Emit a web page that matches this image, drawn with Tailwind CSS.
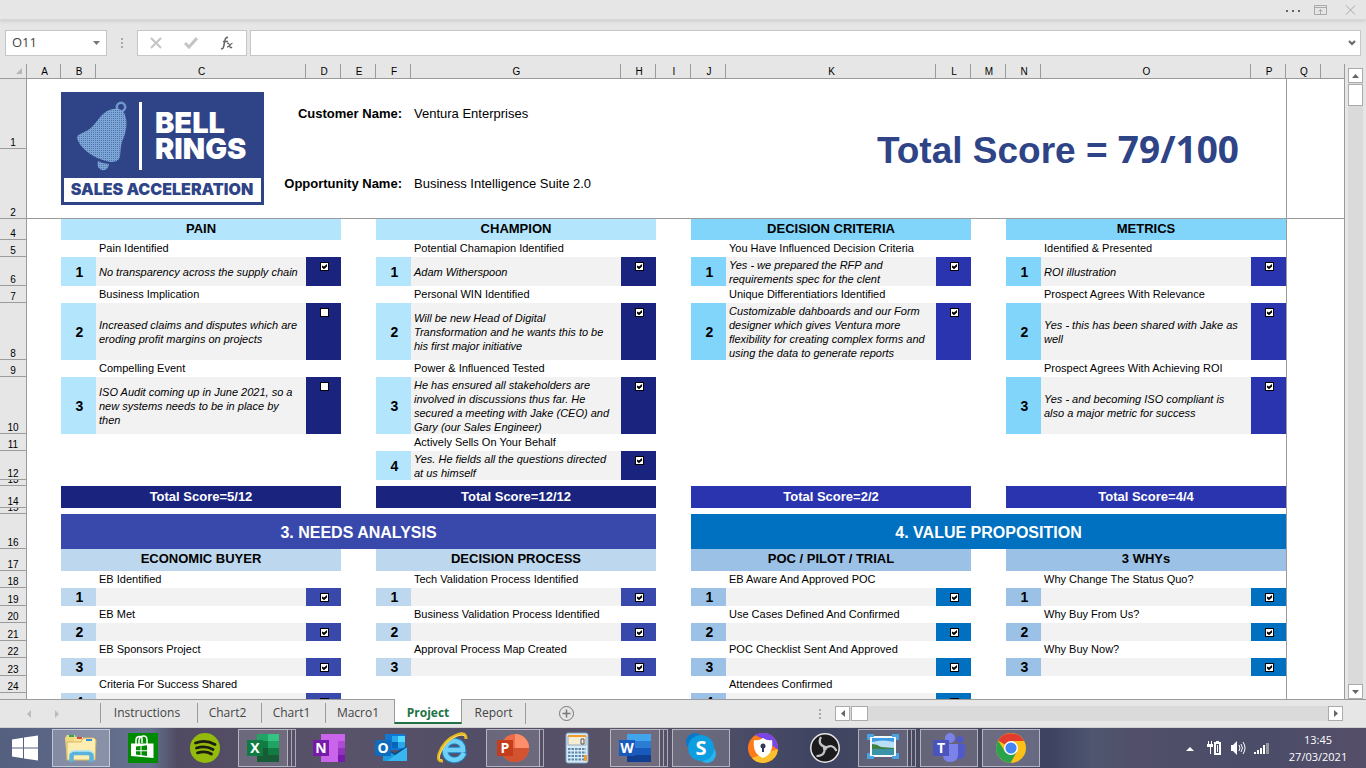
<!DOCTYPE html>
<html lang="en">
<head>
<meta charset="utf-8">
<title>Project</title>
<script src="https://cdn.jsdelivr.net/npm/@tailwindcss/browser@4"></script>
</head>
<body class="h-screen flex flex-col overflow-hidden bg-[#e6e6e6] text-black font-['Liberation_Sans',Arial,sans-serif]">

<svg class="hidden">
  <symbol id="tick" viewBox="0 0 9 9"><path d="M2 3.500v2L4 7.300 7 4.500V2L4 4.600z" fill="#000"/></symbol>
</svg>

<!-- window strip -->
<header class="h-5 shrink-0 flex items-center justify-end gap-3 pr-2 border-b border-[#d6d6d6] shadow-[0_2px_3px_#d2d2d2]">
  <button aria-label="More" class="w-4 h-4"><svg viewBox="0 0 16 16" fill="#666"><path d="M1 8h2v2H1zM7 8h2v2H7zM13 8h2v2h-2z"/></svg></button>
  <button aria-label="Ribbon display options" class="w-4 h-4 mr-px"><svg viewBox="0 0 16 16" fill="none" stroke="#aaa"><path d="M1.500 3.500h12v9h-12zM1.500 5.500h12M7.500 12V7.500M5.500 9.500l2-2 2 2"/></svg></button>
  <button aria-label="Close" class="w-4 h-4"><svg viewBox="0 0 16 16" fill="none" stroke="#aaa"><path d="M4 3.500l9 9M13 3.500l-9 9"/></svg></button>
</header>

<!-- formula bar -->
<div class="shrink-0 flex items-center pl-[5px] pr-[5px] pt-[10px] h-9">
  <div class="w-[102px] h-[26px] flex items-center bg-white border border-[#c6c6c6] pr-[6px]">
    <input aria-label="Name box" value="O11" class="min-w-0 flex-1 pl-[6px] bg-transparent text-[13px] text-[#444] font-['Open_Sans',sans-serif] outline-none">
    <button aria-label="Open name list"><svg width="7" height="4" viewBox="0 0 7 4" fill="#777"><path d="M0 0h7L3.500 4z"/></svg></button>
  </div>
  <svg class="mx-[13px] shrink-0" width="4" height="12" viewBox="0 0 4 12" fill="#aaa"><path d="M1 1h2v2H1zM1 5h2v2H1zM1 9h2v2H1z"/></svg>
  <div class="w-[110px] h-[26px] shrink-0 flex items-center justify-between px-3 bg-white border border-[#c6c6c6]">
    <button aria-label="Cancel"><svg width="12" height="12" viewBox="0 0 12 12" stroke="#c4c4c4" stroke-width="2"><path d="M1 1l10 10M11 1L1 11"/></svg></button>
    <button aria-label="Enter"><svg width="14" height="12" viewBox="0 0 14 12" fill="none" stroke="#c4c4c4" stroke-width="3"><path d="M1 6l4 4 8-9"/></svg></button>
    <button aria-label="Insert function"><svg width="14" height="14" viewBox="0 0 14 14" fill="none" stroke="#666"><path d="M1 12.500c2 1 2.500-1 3-3.500l1-5c.5-2 1.500-3 3-2.500M3 5.500h5" stroke-width="1.500"/><path d="M7 7.500c1.500-1 2 0 2.500 2s1 3 2.500 1.500M12.500 7.500c-1.500-.5-3 3.500-5.500 3.500" stroke-width="1.300"/></svg></button>
  </div>
  <div class="ml-[3px] flex-1 h-[26px] flex items-center bg-white border border-[#c6c6c6] pr-1">
    <input aria-label="Formula" class="min-w-0 flex-1 px-2 bg-transparent text-[13px] outline-none">
    <button aria-label="Expand formula bar"><svg width="8" height="6" viewBox="0 0 8 6" fill="none" stroke="#666" stroke-width="2"><path d="M1 1l3 3 3-3"/></svg></button>
  </div>
</div>

<!-- worksheet -->
<main class="flex-1 min-h-0 flex pt-2">
  <div class="flex-1 min-w-0 overflow-hidden border-r border-[#9b9b9b]">
    <table class="table-fixed w-full border-separate border-spacing-0 text-[11px] leading-[14px]">
      <colgroup id="cols"></colgroup>
      <thead><tr id="letters" class="h-[15px]"></tr></thead>
      <tbody id="sheet"></tbody>
    </table>
  </div>
  <div class="shrink-0 w-[21px] px-[3px] pt-1 flex flex-col bg-[#e6e6e6]">
    <button aria-label="Scroll up" class="h-[15px] shrink-0 bg-white border border-[#ababab] flex items-center justify-center"><svg width="7" height="4" viewBox="0 0 7 4" fill="#666"><path d="M0 4h7L3.500 0z"/></svg></button>
    <div class="flex-1 bg-[#dadada] pt-px"><div class="h-[22px] bg-white border border-[#ababab]"></div></div>
    <button aria-label="Scroll down" class="h-[15px] shrink-0 bg-white border border-[#ababab] flex items-center justify-center"><svg width="7" height="4" viewBox="0 0 7 4" fill="#666"><path d="M0 0h7L3.500 4z"/></svg></button>
  </div>
</main>

<!-- sheet tabs -->
<nav class="h-[29px] shrink-0 flex text-[12px] text-[#444] font-['Open_Sans',sans-serif] border-b border-[#cfcfcf]">
  <div class="w-[100px] shrink-0 flex items-center gap-[23px] pl-[27px] border-t border-[#9b9b9b]">
    <svg width="5" height="8" viewBox="0 0 5 8" fill="#bbb"><path d="M4 0v8L0 4z"/></svg>
    <svg width="5" height="8" viewBox="0 0 5 8" fill="#bbb"><path d="M0 0v8l4-4z"/></svg>
  </div>
  <div class="flex items-stretch border-t border-[#9b9b9b] pt-[3px] pb-[4px]">
    <a href="#" class="w-[97px] pr-1 flex items-center justify-center border-l border-[#9b9b9b]">Instructions</a>
    <a href="#" class="w-16 pr-1 flex items-center justify-center border-l border-[#9b9b9b]">Chart2</a>
    <a href="#" class="w-16 pr-1 flex items-center justify-center border-l border-[#9b9b9b]">Chart1</a>
    <a href="#" class="w-[69px] pr-1 flex items-center justify-center border-l border-[#9b9b9b]">Macro1</a>
  </div>
  <a href="#" class="w-[68px] h-[25px] flex items-center justify-center bg-white border-x border-[#9b9b9b] border-b-2 border-b-[#217346] text-[#217346] font-bold pt-1">Project</a>
  <div class="flex-1 flex items-center border-t border-[#9b9b9b]">
    <a href="#" class="w-16 h-[21px] -mt-px flex items-center justify-center border-r border-[#9b9b9b]">Report</a>
    <button aria-label="New sheet" class="ml-8"><svg width="17" height="17" viewBox="0 0 17 17" fill="none" stroke="#777"><circle cx="8.500" cy="8.500" r="7"/><path d="M8.500 4.500v8M4.500 8.500h8" stroke-width="1.500"/></svg></button>
    <svg class="ml-auto" width="4" height="12" viewBox="0 0 4 12" fill="#aaa"><path d="M1 1h2v2H1zM1 5h2v2H1zM1 9h2v2H1z"/></svg>
    <div class="ml-[13px] mr-[23px] w-[508px] h-[15px] flex bg-[#dadada]">
      <button aria-label="Scroll left" class="w-[15px] bg-white border border-[#ababab] flex items-center justify-center"><svg width="4" height="7" viewBox="0 0 4 7" fill="#666"><path d="M4 0v7L0 3.500z"/></svg></button>
      <div class="ml-px w-[17px] bg-white border border-[#ababab]"></div>
      <button aria-label="Scroll right" class="ml-auto w-[15px] bg-white border border-[#ababab] flex items-center justify-center"><svg width="4" height="7" viewBox="0 0 4 7" fill="#666"><path d="M0 0v7l4-3.500z"/></svg></button>
    </div>
  </div>
</nav>

<!-- taskbar -->
<footer class="h-10 shrink-0 flex items-stretch bg-[linear-gradient(90deg,#545f80_0%,#66728f_11%,#504b62_13%,#59536a_25%,#514d66_36%,#5a5468_46%,#494b66_55%,#3e4461_60%,#4e4b62_70%,#3d4362_77%,#4f566f_80%,#514f69_83%,#4a4c68_92%,#554e69_100%)]">
  <button aria-label="Start" class="w-[50px] flex items-center justify-center"><svg width="28" height="28" viewBox="0 0 28 28" fill="#fff"><path d="M1 5.500l11-1.700v9.700H1zM13 3.600L27 1.500v12H13zM1 14.500h11v9.800L1 22.600zM13 14.500h14v12l-14-2z"/></svg></button>

  <button aria-label="File Explorer" class="mx-[2px] w-[58px] my-px border border-white/50 bg-white/25 flex items-center justify-center"><svg width="32" height="32" viewBox="0 0 32 32"><path d="M0 6l2-3h8l1 3v22H2z" fill="#f1d77d"/><path d="M9 7l1-2h8l1 2v20H9z" fill="#f7e296"/><path d="M4 3h5v2H4z" fill="#2fa84c"/><path d="M12 5h5v2h-5z" fill="#d24b3c"/><path d="M17 8l2-2h10l2 2-1 20H2V10h14z" fill="#fbeeb0" stroke="#d8b860"/><path d="M21 7h6v2h-6z" fill="#3b8fd8"/><path d="M6.500 30v-6q0-3 3-3h14q3 0 3 3v6" fill="none" stroke="#5ab3dc" stroke-width="4.500"/><path d="M5 21q2-2 4-2h15q3 0 4 2" fill="none" stroke="#b9e6f7" stroke-width="1.500"/></svg></button>

  <button aria-label="Store" class="mx-[2px] w-[58px] flex items-center justify-center"><svg width="32" height="32" viewBox="0 0 32 32"><path d="M1 1h30v30H1z" fill="#008a00"/><path d="M4 11.500h22.500V26L4 24z" fill="#fff"/><path d="M9 12V8q0-3 3-3.500 3-.5 3 2.500v4M12 12V8q1-4 4.500-4t3.500 4v4" fill="none" stroke="#fff" stroke-width="1.500"/><path d="M9 14.600l4.500-.6v4.200H9zM14.500 13.900l5.500-.7v5h-5.500zM9 19.200h4.500v4L9 22.600zM14.500 19.200h5.500v4.800l-5.500-.7z" fill="#008a00"/></svg></button>

  <button aria-label="Spotify" class="mx-[2px] w-[58px] flex items-center justify-center"><svg width="32" height="32" viewBox="0 0 32 32"><circle cx="16" cy="16" r="15" fill="#94bb0b"/><path d="M6.500 11q10-4 19.500 1.500M7.500 16q9-3 16.500 1.500M8.500 20.800q8-2.500 14 1.200" fill="none" stroke="#1b1f10" stroke-width="2.800" stroke-linecap="round"/></svg></button>

  <button aria-label="Excel" class="mx-[2px] w-[58px] my-px flex"><span class="w-[50px] h-full border border-white/50 bg-white/15 flex items-center justify-center"><svg width="32" height="32" viewBox="0 0 32 32"><path d="M10 2h11v28H10z" fill="#21a366"/><path d="M21 2h11v7H21z" fill="#33c481"/><path d="M10 9h11v7H10z" fill="#107c41"/><path d="M21 9h11v7H21z" fill="#21a366"/><path d="M10 16h22v14H10z" fill="#185c37"/><path d="M21 16h11v7H21z" fill="#107c41"/><path d="M0 8h16v16H0z" fill="#107c41"/><text x="8" y="21" text-anchor="middle" font-family="Open Sans,sans-serif" font-weight="700" font-size="14" fill="#fff">X</text></svg></span><span class="w-1 h-full border border-l-0 border-white/50"></span><span class="w-1 h-full border border-l-0 border-white/50"></span></button>

  <button aria-label="OneNote" class="mx-[2px] w-[58px] flex items-center justify-center"><svg width="32" height="32" viewBox="0 0 32 32"><path d="M8 2h24v28H8z" fill="#ca64ea"/><path d="M25 9h7v7h-7z" fill="#ae4bd5"/><path d="M25 16h7v7h-7z" fill="#9332bf"/><path d="M25 23h7v7h-7z" fill="#7719aa"/><path d="M0 8h16v16H0z" fill="#7719aa"/><text x="8" y="21" text-anchor="middle" font-family="Open Sans,sans-serif" font-weight="700" font-size="14" fill="#fff">N</text></svg></button>

  <button aria-label="Outlook" class="mx-[2px] w-[58px] flex items-center justify-center"><svg width="32" height="32" viewBox="0 0 32 32"><path d="M10 2h20v16H10z" fill="#0f78d4"/><path d="M17 4h6v6h-6z" fill="#28a8ea"/><path d="M23 4h7v6h-7z" fill="#50d9ff"/><path d="M17 10h6v6h-6z" fill="#0364b8"/><path d="M23 10h7v6h-7z" fill="#28a8ea"/><path d="M8 15l12 8 12-8v14H8z" fill="#1a9be2"/><path d="M32 15v14H12z" fill="#38b6f0"/><path d="M8 16l12 7 12-8v-1l-12 7z" fill="#0a4a8c"/><path d="M0 8h16v16H0z" fill="#0f6cbd"/><text x="8" y="21" text-anchor="middle" font-family="Open Sans,sans-serif" font-weight="700" font-size="14" fill="#fff">O</text></svg></button>

  <button aria-label="Internet Explorer" class="mx-[2px] w-[58px] flex items-center justify-center"><svg width="32" height="32" viewBox="0 0 32 32" fill="none"><path d="M27 21q-3 7-10 7-9-1-9-10 1-9 10-9 8 1 8 9H10" stroke="#1f86c8" stroke-width="6.500"/><path d="M27 21q-3 7-10 7-9-1-9-10 1-9 10-9 8 1 8 9H10" stroke="#6fd0f8" stroke-width="4.500"/><path d="M6 29q-6 1-4-7Q7 8 20 3q9-4 9 4" stroke="#e6b91e" stroke-width="3"/><path d="M5 28q-4 0-2-6Q8 8 20 4q6-2 8 0" stroke="#ffe070"/></svg></button>

  <button aria-label="PowerPoint" class="mx-[2px] w-[58px] my-px flex"><span class="w-[54px] h-full border border-white/50 bg-white/15 flex items-center justify-center"><svg width="32" height="32" viewBox="0 0 32 32"><circle cx="18" cy="16" r="14" fill="#ed6c47"/><path d="M18 2a14 14 0 0 1 14 14H18z" fill="#ff8f6b"/><path d="M4 16h28a14 14 0 0 1-28 0z" fill="#d35230"/><path d="M0 8h16v16H0z" fill="#c43e1c"/><text x="8" y="21" text-anchor="middle" font-family="Open Sans,sans-serif" font-weight="700" font-size="14" fill="#fff">P</text></svg></span><span class="w-1 h-full border border-l-0 border-white/50"></span></button>

  <button aria-label="Calculator" class="mx-[2px] w-[58px] flex items-center justify-center"><svg width="32" height="32" viewBox="0 0 32 32"><rect x="5" y="1" width="22" height="30" rx="2" fill="#d8ebf7" stroke="#7ea6c3"/><path d="M7 4h18v9H7z" fill="#f6edd2" stroke="#9ab"/><path d="M7 3h18v2H7z" fill="#f39c2d"/><path d="M20 7h3v5h-3z" fill="none" stroke="#556"/><path d="M7 17h18M7 20.500h18M7 24h18M7 27.500h18" stroke="#5b88ad" stroke-width="2.200" stroke-dasharray="2.500 1"/><path d="M23 23h3v6h-3z" fill="#f39c2d"/></svg></button>

  <button aria-label="Word" class="mx-[2px] w-[58px] my-px flex"><span class="w-[50px] h-full border border-white/50 bg-white/15 flex items-center justify-center"><svg width="32" height="32" viewBox="0 0 32 32"><path d="M8 2h24v7H8z" fill="#41a5ee"/><path d="M8 9h24v7H8z" fill="#2b7cd3"/><path d="M8 16h24v7H8z" fill="#185abd"/><path d="M8 23h24v7H8z" fill="#103f91"/><path d="M0 8h16v16H0z" fill="#185abd"/><text x="8" y="21" text-anchor="middle" font-family="Open Sans,sans-serif" font-weight="700" font-size="14" fill="#fff">W</text></svg></span><span class="w-1 h-full border border-l-0 border-white/50"></span><span class="w-1 h-full border border-l-0 border-white/50"></span></button>

  <button aria-label="Skype" class="mx-[2px] w-[58px] my-px border border-white/50 bg-white/15 flex items-center justify-center"><svg width="32" height="32" viewBox="0 0 32 32"><circle cx="10" cy="10" r="9" fill="#0a78c8"/><circle cx="22" cy="22" r="9" fill="#28b5ee"/><circle cx="16" cy="16" r="13" fill="#0d9de0"/><text x="16" y="23" text-anchor="middle" font-family="Open Sans,sans-serif" font-weight="700" font-size="20" fill="#fff">S</text></svg></button>

  <button aria-label="Secure Browser" class="mx-[2px] w-[58px] flex items-center justify-center"><svg width="32" height="32" viewBox="0 0 32 32"><circle cx="16" cy="16" r="15" fill="#ff7a1a"/><path d="M8 3Q20-3 28 7q4 6 3 11L20 9z" fill="#7b46e8"/><path d="M31 17q-1 10-10 13Q11 33 5 26l17-6z" fill="#fbc02d"/><path d="M16 6q4 3 9 2 2 14-9 18Q5 22 7 8q5 1 9-2z" fill="#fff"/><circle cx="16" cy="14" r="2.500" fill="#333a5c"/><path d="M15 15h2v5h-2z" fill="#333a5c"/></svg></button>

  <button aria-label="OBS Studio" class="mx-[2px] w-[58px] flex items-center justify-center"><svg width="32" height="32" viewBox="0 0 32 32"><circle cx="16" cy="16" r="14.200" fill="#1b1a1d" stroke="#e8e8e8" stroke-width="1.500"/><path d="M16 15Q8 12 12 5M16.500 16q7-5 11 3M15.500 16q1 8-8 8" fill="none" stroke="#c4c4c4" stroke-width="2.200"/><circle cx="16" cy="16" r="2.200" fill="#c4c4c4"/></svg></button>

  <button aria-label="Photo viewer" class="mx-[2px] w-[58px] my-px flex"><span class="w-[50px] h-full border border-white/50 bg-white/15 flex items-center justify-center"><svg width="32" height="32" viewBox="0 0 32 32"><path d="M3 4h26v21H3z" fill="#f3f9fd"/><path d="M5 6h22v5H5z" fill="#3d9be6"/><path d="M5 10q11-3 22 0v6H5z" fill="#b9def5"/><path d="M5 12q5 0 9 3l13 1v1H5z" fill="#3f7f3f"/><path d="M5 17h22v6H5z" fill="#3b93a8"/><path d="M1.500 8V3.500H7M25 3.500h5.500V8M30.500 21v4.500H25M7 25.500H1.500V21" fill="none" stroke="#4aa3df" stroke-width="3"/></svg></span><span class="w-1 h-full border border-l-0 border-white/50"></span><span class="w-1 h-full border border-l-0 border-white/50"></span></button>

  <button aria-label="Teams" class="mx-[2px] w-[58px] my-px border border-white/50 bg-white/15 flex items-center justify-center"><svg width="32" height="32" viewBox="0 0 32 32"><circle cx="27" cy="7.500" r="3.500" fill="#5059c9"/><circle cx="17" cy="6" r="5" fill="#7b83eb"/><path d="M22 12h10v9q0 6-6 6h-4z" fill="#5059c9"/><path d="M10 12h15v10q0 8-8 8-6 0-7-6z" fill="#7b83eb"/><path d="M0 8h16v16H0z" fill="#4b53bc"/><text x="8" y="21" text-anchor="middle" font-family="Open Sans,sans-serif" font-weight="700" font-size="14" fill="#fff">T</text></svg></button>

  <button aria-label="Chrome" class="mx-[2px] w-[58px] my-px border border-white/50 bg-white/20 flex items-center justify-center"><svg width="32" height="32" viewBox="0 0 32 32"><circle cx="16" cy="16" r="15" fill="#fbc116"/><path d="M16 16L3 8.500A15 15 0 0 1 29 9H16z" fill="#e33b2e"/><path d="M3 8.500A15 15 0 0 0 15.500 31L22 19.500 10 19.500z" fill="#2ba24c"/><circle cx="16" cy="16" r="7" fill="#fff"/><circle cx="16" cy="16" r="5.600" fill="#4285f4"/></svg></button>

  <div class="ml-auto flex items-center text-white">
    <svg class="mr-3" width="8" height="5" viewBox="0 0 8 5" fill="#fff"><path d="M0 5h8L4 1z"/></svg>
    <svg class="mr-2" width="16" height="16" viewBox="0 0 16 16" fill="#fff"><path d="M2 1h1v3h2V1h1v3h1v3H5v7H4V7H1V4h1z"/><path d="M10 1h3v1h2v13H8V2h2zM10 4v9h3V4z" fill-rule="evenodd"/><path d="M11 5h1v7h-1z"/></svg>
    <svg class="mr-2" width="16" height="16" viewBox="0 0 16 16" fill="#fff"><path d="M1 5h2l4-4v14l-4-4H1z"/><path d="M9 5q2 3 0 6M11 4q3 4 0 8M13 2q4 6 0 12" fill="none" stroke="#fff"/></svg>
    <svg class="mr-4" width="16" height="14" viewBox="0 0 16 14" fill="#fff"><path d="M0 11h2v2H0zM3 9h2v4H3zM6 7h2v6H6zM9 4h2v9H9z"/><path d="M12 2h3v11h-3z" fill="#999"/></svg>
    <div class="w-16 mr-4 text-center text-[11px] leading-[17px] font-['Open_Sans',sans-serif]"><div>13:45</div><div>27/03/2021</div></div>
  </div>
</footer>

<script>
const widths = [27, 34, 35, 210, 35, 35, 35, 210, 35, 35, 35, 210, 35, 35, 35, 210, 35, 35, 0];
document.getElementById('cols').innerHTML = widths.map(w => w ? `<col style="width:${w}px">` : '<col>').join('');

const corner = '<th class="p-0 align-bottom bg-[#e6e6e6] border-r border-b border-[#9b9b9b]"><svg class="ml-auto mr-1 mb-1" width="6" height="6" viewBox="0 0 6 6" fill="#b7b7b7"><path d="M6 0v6H0z"/></svg></th>';
document.getElementById('letters').innerHTML = corner +
  [...'ABCDEFGHIJKLMNOPQ', ''].map(c => `<th scope="col" class="p-0 pl-[2px] align-bottom font-normal text-[10px] leading-[12px] bg-[#e6e6e6] border-b border-[#9b9b9b] ${c ? 'border-r' : ''}">${c}</th>`).join('');

// Fill colours of the four column groups: number cell and heading, tick cell.
const upper = [
  { soft: 'bg-[#b3e5fc]', deep: 'bg-[#1a237e]' }, { soft: 'bg-[#b3e5fc]', deep: 'bg-[#1a237e]' },
  { soft: 'bg-[#81d4fa]', deep: 'bg-[#2934ae]' }, { soft: 'bg-[#81d4fa]', deep: 'bg-[#2934ae]' }];
const lower = [
  { soft: 'bg-[#bdd7ee]', deep: 'bg-[#3949ab]' }, { soft: 'bg-[#bdd7ee]', deep: 'bg-[#3949ab]' },
  { soft: 'bg-[#9bc2e6]', deep: 'bg-[#0070c0]' }, { soft: 'bg-[#9bc2e6]', deep: 'bg-[#0070c0]' }];

const blank = '<td class="p-0 bg-white"></td>';
const edge = '<td class="p-0 bg-white border-l border-[#9b9b9b]"></td><td class="p-0 bg-white"></td>';
const row = (n, h, cells) => `<tr style="height:${h}px"><th scope="row" class="p-0 align-bottom font-normal text-[10px] leading-[10px] bg-[#e6e6e6] border-r border-b border-[#9b9b9b]"><div class="overflow-hidden flex flex-col justify-end" style="max-height:${h - 1}px">${n}</div></th>${cells}</tr>`;
const groups = (pal, list, cell) => blank + list.map((v, i) => cell(v, pal[i])).join(blank) + edge;

const heading = (t, p) => `<td colspan="3" class="p-0 pb-[2px] text-center text-[13px] leading-[16px] font-bold ${p.soft}">${t}</td>`;
const label = t => `<td class="p-0 bg-white"></td><td class="p-0 pb-[2px] pl-[3px] bg-white whitespace-nowrap">${t || ''}</td><td class="p-0 bg-white"></td>`;
const total = (t, p) => `<td colspan="3" class="p-0 text-center text-[13px] leading-[16px] font-bold text-white ${p.deep}">${t}</td>`;
const entry = (v, p) => v
  ? `<td class="p-0 pl-[2px] text-center text-[14px] leading-[16px] font-bold ${p.soft}">${v[0]}</td>
     <td class="p-0 pl-[3px] bg-[#f2f2f2] italic whitespace-nowrap">${v[1]}</td>
     <td class="p-0 pl-[14px] pt-[5px] align-top ${p.deep}"><label class="grid w-[9px] h-[9px]"><input type="checkbox" aria-label="Item ${v[0]} done" class="col-start-1 row-start-1 appearance-none w-[9px] h-[9px] bg-white border border-black" ${v[2] ? 'checked' : ''}>${v[2] ? '<svg class="col-start-1 row-start-1 w-[9px] h-[9px] pointer-events-none"><use href="#tick"/></svg>' : ''}</label></td>`
  : '<td colspan="3" class="p-0 bg-white"></td>';

const logo = `<svg width="203" height="113" viewBox="0 0 203 113" role="img" aria-label="Bell Rings Sales Acceleration">
  <defs><pattern id="dots" width="2" height="2" patternUnits="userSpaceOnUse"><rect width="2" height="2" fill="#7da6d4"/><path d="M0 0h1v1H0z" fill="#4f76b3"/></pattern></defs>
  <path d="M0 0h203v113H0z" fill="#2e4487"/>
  <circle cx="60" cy="15" r="4.200" fill="none" stroke="#7099cb" stroke-width="2.500"/>
  <path d="M52 17q6-1 10 2c5 8 4 17 1 26-4 8-3 13-4 19-1 6-7 7-14 5C33 66 19 57 16 46c0-5 9-5 15-11 6-6 10-16 21-18z" fill="url(#dots)"/>
  <path d="M37 69q5 3 11 3-1 7-7 6-6-2-4-9z" fill="url(#dots)"/>
  <path d="M78 10h3v68h-3z" fill="#fff"/>
  <g font-family="Inter,sans-serif" font-weight="900" fill="#fff" font-size="29"><text x="94" y="41">BELL</text><text x="94" y="67">RINGS</text></g>
  <path d="M3 86h197v24H3z" fill="#fff"/>
  <text x="101" y="103" text-anchor="middle" font-family="Inter,sans-serif" font-weight="900" font-size="16" fill="#2e4487">SALES ACCELERATION</text></svg>`;

const rows = [];
const field = (k, v, b) => `<td colspan="3" class="p-0 bg-white ${b}"><div class="flex justify-end pr-[9px] text-[13px] leading-4 font-bold whitespace-nowrap">${k}</div></td><td class="p-0 pl-[3px] bg-white text-[13px] leading-4 whitespace-nowrap ${b}">${v}</td>`;
const line = 'border-b border-[#9b9b9b]';
rows.push(row(1, 70, blank + `<td rowspan="2" colspan="2" class="p-0 pt-[13px] align-top bg-white ${line}">${logo}</td>` + field('Customer Name:', 'Ventura Enterprises', '') + blank + blank +
  `<td rowspan="2" colspan="7" class="p-0 pt-[2px] pr-[47px] text-right bg-white text-[37px] leading-[44px] font-bold text-[#2e4487] whitespace-nowrap ${line}">Total Score = <span class="font-['Noto_Sans',sans-serif]">79/100</span></td>` + edge));
rows.push(row(2, 70, `<td class="p-0 bg-white ${line}"></td>` + field('Opportunity Name:', 'Business Intelligence Suite 2.0', line) + `<td colspan="2" class="p-0 bg-white ${line}"></td><td class="p-0 bg-white border-l ${line}"></td><td class="p-0 bg-white ${line}"></td>`));

rows.push(row(4, 21, groups(upper, ['PAIN', 'CHAMPION', 'DECISION CRITERIA', 'METRICS'], heading)));
rows.push(row(5, 17, groups(upper, ['Pain Identified', 'Potential Chamapion Identified', 'You Have Influenced Decision Criteria', 'Identified &amp; Presented'], label)));
rows.push(row(6, 29, groups(upper, [
  [1, 'No transparency across the supply chain', 1], [1, 'Adam Witherspoon', 1],
  [1, 'Yes - we prepared the RFP and<br>requirements spec for the clent', 1], [1, 'ROI illustration', 1]], entry)));
rows.push(row(7, 17, groups(upper, ['Business Implication', 'Personal WIN Identified', 'Unique Differentiatiors Identified', 'Prospect Agrees With Relevance'], label)));
rows.push(row(8, 57, groups(upper, [
  [2, 'Increased claims and disputes which are<br>eroding profit margins on projects', 0],
  [2, 'Will be new Head of Digital<br>Transformation and he wants this to be<br>his first major initiative', 1],
  [2, 'Customizable dahboards and our Form<br>designer which gives Ventura more<br>flexibility for creating complex forms and<br>using the data to generate reports', 1],
  [2, 'Yes - this has been shared with Jake as<br>well', 1]], entry)));
rows.push(row(9, 17, groups(upper, ['Compelling Event', 'Power &amp; Influenced Tested', '', 'Prospect Agrees With Achieving ROI'], label)));
rows.push(row(10, 57, groups(upper, [
  [3, 'ISO Audit coming up in June 2021, so a<br>new systems needs to be in place by<br>then', 0],
  [3, 'He has ensured all stakeholders are<br>involved in discussions thus far. He<br>secured a meeting with Jake (CEO) and<br>Gary (our Sales Engineer)', 1],
  null, [3, 'Yes - and becoming ISO compliant is<br>also a major metric for success', 1]], entry)));
rows.push(row(11, 17, groups(upper, ['', 'Actively Sells On Your Behalf', '', ''], label)));
rows.push(row(12, 29, groups(upper, [null, [4, 'Yes. He fields all the questions directed<br>at us himself', 1], null, null], entry)));
rows.push(row(13, 6, groups(upper, ['', '', '', ''], () => entry(null))));
rows.push(row(14, 22, groups(upper, ['Total Score=5/12', 'Total Score=12/12', 'Total Score=2/2', 'Total Score=4/4'], total)));
rows.push(row(15, 6, groups(upper, ['', '', '', ''], () => entry(null))));
rows.push(row(16, 35, blank +
  '<td colspan="7" class="p-0 pt-[2px] text-center text-[16px] leading-5 font-bold text-white bg-[#3949ab]">3. NEEDS ANALYSIS</td>' + blank +
  '<td colspan="7" class="p-0 pt-[2px] text-center text-[16px] leading-5 font-bold text-white bg-[#0070c0]">4. VALUE PROPOSITION</td>' + edge));
rows.push(row(17, 22, groups(lower, ['ECONOMIC BUYER', 'DECISION PROCESS', 'POC / PILOT / TRIAL', '3 WHYs'], heading)));
const steps = [
  ['EB Identified', 'Tech Validation Process Identified', 'EB Aware And Approved POC', 'Why Change The Status Quo?'],
  ['EB Met', 'Business Validation Process Identified', 'Use Cases Defined And Confirmed', 'Why Buy From Us?'],
  ['EB Sponsors Project', 'Approval Process Map Created', 'POC Checklist Sent And Approved', 'Why Buy Now?'],
  ['Criteria For Success Shared', '', 'Attendees Confirmed', '']];
steps.forEach((s, i) => {
  rows.push(row(18 + 2 * i, 17, groups(lower, s, label)));
  rows.push(row(19 + 2 * i, 18, groups(lower, s.map(t => t ? [i + 1, '', 1] : null), entry)));
});
document.getElementById('sheet').innerHTML = rows.join('');
</script>
</body>
</html></script>
